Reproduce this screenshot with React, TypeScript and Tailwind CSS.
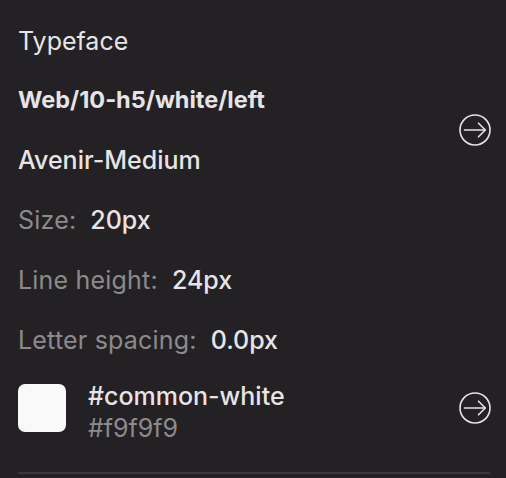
const rows = [
  { label: "Size:", value: "20px" },
  { label: "Line height:", value: "24px" },
  { label: "Letter spacing:", value: "0.0px" },
];

function ArrowCircle({ className = "" }: { className?: string }) {
  return (
    <svg className={className} width="32" height="32" viewBox="0 0 32 32" fill="none" stroke="#e6e4e6" strokeWidth="1.6" strokeLinecap="round" strokeLinejoin="round">
      <circle cx="16" cy="16" r="15" />
      <path d="M5.5 16H26" />
      <path d="M19.5 9.2L26.3 16L19.5 22.8" />
    </svg>
  );
}

export default function App() {
  return (
    <div className="w-[506px] h-[478px] overflow-hidden bg-[#242124] pl-[18px] pr-[15px] pt-[12px] text-[25px] text-[#e6e4e6] font-['Inter','Liberation_Sans',sans-serif]">
      <div className="h-[58px] leading-[58px]">Typeface</div>

      <div className="flex items-center justify-between">
        <div className="flex flex-col">
          <div className="h-[60px] leading-[60px] font-bold text-[23.5px]">Web/10-h5/white/left</div>
          <div className="h-[60px] leading-[60px] font-medium">Avenir-Medium</div>
        </div>
        <ArrowCircle />
      </div>

      {rows.map((r) => (
        <div key={r.label} className="h-[60px] leading-[60px] flex gap-[14px]">
          <span className="text-[#8d8a8d] tracking-[0.2px]">{r.label}</span>
          <span className="font-medium">{r.value}</span>
        </div>
      ))}

      <div className="flex items-start justify-between pt-[14px]">
        <div className="flex items-start gap-[22px]">
          <div className="w-[48px] h-[48px] rounded-[7px] bg-[#f9f9f9]" />
          <div className="flex flex-col -mt-[4px]">
            <span className="leading-[32px] font-medium">#common-white</span>
            <span className="leading-[32px] text-[#8d8a8d]">#f9f9f9</span>
          </div>
        </div>
        <ArrowCircle className="mt-[8px]" />
      </div>

      <div className="mt-[28px] mr-[1px] h-[2px] bg-[#3a373a]" />
    </div>
  );
}
